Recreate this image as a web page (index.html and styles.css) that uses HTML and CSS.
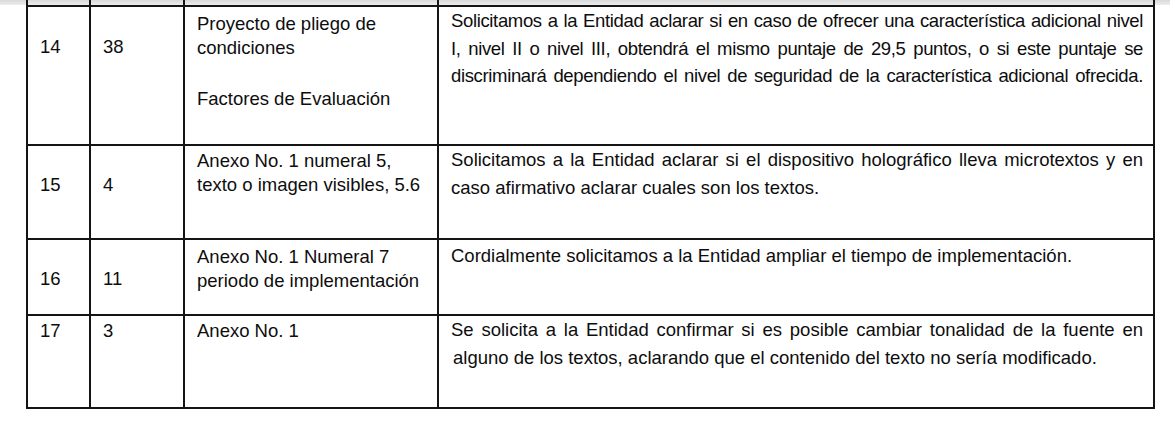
FILE: index.html
```html
<!DOCTYPE html>
<html lang="es">
<head>
<meta charset="utf-8">
<title>Observaciones</title>
<link rel="stylesheet" href="styles.css">
</head>
<body>
<div class="page">
  <table class="obs">
    <colgroup>
      <col class="c1"><col class="c2"><col class="c3"><col class="c4">
    </colgroup>
    <tr class="stub"><td></td><td></td><td></td><td></td></tr>
    <tr class="r14">
      <td class="num second">14</td>
      <td class="num second">38</td>
      <td class="ref">
        <p>Proyecto de pliego de<br>condiciones</p>
        <p class="gap">Factores de Evaluación</p>
      </td>
      <td class="req tight">
        <span class="jl">Solicitamos a la Entidad aclarar si en caso de ofrecer una característica adicional nivel</span>
        <span class="jl">I, nivel II o nivel III, obtendrá el mismo puntaje de 29,5 puntos, o si este puntaje se</span>
        <span class="jl">discriminará dependiendo el nivel de seguridad de la característica adicional ofrecida.</span>
      </td>
    </tr>
    <tr class="r15">
      <td class="num second">15</td>
      <td class="num second">4</td>
      <td class="ref"><p>Anexo No. 1 numeral 5,<br>texto o imagen visibles, 5.6</p></td>
      <td class="req">
        <span class="jl">Solicitamos a la Entidad aclarar si el dispositivo holográfico lleva microtextos y en</span>
        <span class="ll">caso afirmativo aclarar cuales son los textos.</span>
      </td>
    </tr>
    <tr class="r16">
      <td class="num second">16</td>
      <td class="num second">11</td>
      <td class="ref"><p>Anexo No. 1 Numeral 7<br>periodo de implementación</p></td>
      <td class="req">
        <span class="ll">Cordialmente solicitamos a la Entidad ampliar el tiempo de implementación.</span>
      </td>
    </tr>
    <tr class="r17">
      <td class="num">17</td>
      <td class="num">3</td>
      <td class="ref"><p>Anexo No. 1</p></td>
      <td class="req">
        <span class="jl">Se solicita a la Entidad confirmar si es posible cambiar tonalidad de la fuente en</span>
        <span class="ll indent">alguno de los textos, aclarando que el contenido del texto no sería modificado.</span>
      </td>
    </tr>
  </table>
</div>
</body>
</html>
```

FILE: styles.css
```css
html, body {
  margin: 0;
  padding: 0;
  background: #ffffff;
}

.page {
  width: 1170px;
  height: 421px;
  overflow: hidden;
  background: linear-gradient(#d9d9d9, #ededed) top left / 100% 5px no-repeat, #ffffff;
  font-family: "Liberation Sans", Arial, sans-serif;
  color: #0d0d0d;
}

.obs {
  margin-left: 26px;
  width: 1127px;
  border-collapse: collapse;
  table-layout: fixed;
  font-size: 18.5px;
}

.c1 { width: 63px; }
.c2 { width: 94px; }
.c3 { width: 254px; }
.c4 { width: 716px; }

.obs td {
  border: 2px solid #141414;
  vertical-align: top;
  padding: 4px 11px 0 12px;
  line-height: 24px;
}

.stub { height: 6px; }
.r14 { height: 139px; }
.r15 { height: 94px; }
.r16 { height: 76px; }
.r17 { height: 93px; }

.stub td {
  padding: 0;
  border-top: none;
  background: transparent;
  line-height: 0;
}

.obs .num {
  padding-left: 12px;
  padding-top: 3px;
}

.obs .num.second {
  padding-top: 27px;
}

.r14 .num.second {
  padding-top: 28px;
}

.r14 .ref { padding-top: 5px; }
.r15 .ref { padding-top: 3px; }
.r16 .ref { padding-top: 5px; }
.r17 .ref { padding-top: 3px; }

.ref p {
  margin: 0;
}

.ref p.gap {
  margin-top: 27px;
}

.obs .req {
  line-height: 27.5px;
  padding-top: 0;
  padding-right: 10px;
}

.obs .r16 .req {
  padding-top: 2px;
}

.req .jl {
  display: block;
  text-align: justify;
  text-align-last: justify;
  white-space: nowrap;
}

.req .ll {
  display: block;
  white-space: nowrap;
}

.req .indent {
  padding-left: 2px;
}

.req.tight {
  letter-spacing: -0.35px;
}
```
